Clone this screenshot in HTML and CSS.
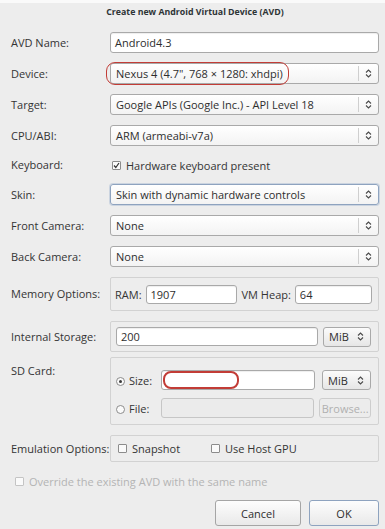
FILE: index.html
```html
<!DOCTYPE html>
<html lang="en">

<head>
    <meta charset="UTF-8" />
    <title>Create new Android Virtual Device (AVD)</title>
    <link rel="stylesheet" href="styles.css">
</head>

<body>
    <div class="dialog">
        <div class="title">Create new Android Virtual Device (AVD)</div>

        <div class="row row-first">
            <div class="lbl">AVD Name:</div>
            <div class="field"><div class="entry">Android4.3</div></div>
        </div>

        <div class="row">
            <div class="lbl">Device:</div>
            <div class="field">
                <div class="combo">
                    <span class="combo-text">Nexus 4 (4.7", 768 × 1280: xhdpi)</span>
                    <span class="combo-btn"><svg width="7" height="11" viewBox="0 0 7 11"><path d="M1 4.5 L3.5 2 L6 4.5 M1 6.5 L3.5 9 L6 6.5" fill="none" stroke="#4a4a4a" stroke-width="1.1"/></svg></span>
                    <span class="mark mark-device"></span>
                </div>
            </div>
        </div>

        <div class="row">
            <div class="lbl">Target:</div>
            <div class="field">
                <div class="combo">
                    <span class="combo-text">Google APIs (Google Inc.) - API Level 18</span>
                    <span class="combo-btn"><svg width="7" height="11" viewBox="0 0 7 11"><path d="M1 4.5 L3.5 2 L6 4.5 M1 6.5 L3.5 9 L6 6.5" fill="none" stroke="#4a4a4a" stroke-width="1.1"/></svg></span>
                </div>
            </div>
        </div>

        <div class="row">
            <div class="lbl">CPU/ABI:</div>
            <div class="field">
                <div class="combo">
                    <span class="combo-text">ARM (armeabi-v7a)</span>
                    <span class="combo-btn"><svg width="7" height="11" viewBox="0 0 7 11"><path d="M1 4.5 L3.5 2 L6 4.5 M1 6.5 L3.5 9 L6 6.5" fill="none" stroke="#4a4a4a" stroke-width="1.1"/></svg></span>
                </div>
            </div>
        </div>

        <div class="row row-short">
            <div class="lbl">Keyboard:</div>
            <div class="field check-line">
                <span class="check"><svg width="7" height="7" viewBox="0 0 7 7"><path d="M1 3.5 L2.8 5.5 L6 1" fill="none" stroke="#333" stroke-width="1.2"/></svg></span>
                <span>Hardware keyboard present</span>
            </div>
        </div>

        <div class="row">
            <div class="lbl">Skin:</div>
            <div class="field">
                <div class="combo combo-focus">
                    <span class="combo-text">Skin with dynamic hardware controls</span>
                    <span class="combo-btn"><svg width="7" height="11" viewBox="0 0 7 11"><path d="M1 4.5 L3.5 2 L6 4.5 M1 6.5 L3.5 9 L6 6.5" fill="none" stroke="#4a4a4a" stroke-width="1.1"/></svg></span>
                </div>
            </div>
        </div>

        <div class="row">
            <div class="lbl">Front Camera:</div>
            <div class="field">
                <div class="combo">
                    <span class="combo-text">None</span>
                    <span class="combo-btn"><svg width="7" height="11" viewBox="0 0 7 11"><path d="M1 4.5 L3.5 2 L6 4.5 M1 6.5 L3.5 9 L6 6.5" fill="none" stroke="#4a4a4a" stroke-width="1.1"/></svg></span>
                </div>
            </div>
        </div>

        <div class="row">
            <div class="lbl">Back Camera:</div>
            <div class="field">
                <div class="combo">
                    <span class="combo-text">None</span>
                    <span class="combo-btn"><svg width="7" height="11" viewBox="0 0 7 11"><path d="M1 4.5 L3.5 2 L6 4.5 M1 6.5 L3.5 9 L6 6.5" fill="none" stroke="#4a4a4a" stroke-width="1.1"/></svg></span>
                </div>
            </div>
        </div>

        <div class="row">
            <div class="lbl">Memory Options:</div>
            <div class="field group group-memory">
                <span class="inner-lbl">RAM:</span>
                <div class="entry entry-ram">1907</div>
                <span class="inner-lbl heap-lbl">VM Heap:</span>
                <div class="entry entry-grow">64</div>
            </div>
        </div>

        <div class="row">
            <div class="lbl">Internal Storage:</div>
            <div class="field group group-internal">
                <div class="entry entry-grow">200</div>
                <div class="unit">MiB <svg width="7" height="11" viewBox="0 0 7 11"><path d="M1 4.5 L3.5 2 L6 4.5 M1 6.5 L3.5 9 L6 6.5" fill="none" stroke="#4a4a4a" stroke-width="1.1"/></svg></div>
            </div>
        </div>

        <div class="row row-sd row-top">
            <div class="lbl lbl-sd">SD Card:</div>
            <div class="field group group-sd">
                <div class="sd-line">
                    <span class="sd-opt"><span class="radio radio-on"></span>Size:</span>
                    <div class="entry entry-sd">
                        <span class="mark mark-size"></span>
                    </div>
                    <div class="unit unit-sd">MiB <svg width="7" height="11" viewBox="0 0 7 11"><path d="M1 4.5 L3.5 2 L6 4.5 M1 6.5 L3.5 9 L6 6.5" fill="none" stroke="#4a4a4a" stroke-width="1.1"/></svg></div>
                </div>
                <div class="sd-line">
                    <span class="sd-opt"><span class="radio"></span>File:</span>
                    <div class="entry entry-sd entry-off"></div>
                    <div class="btn btn-off">Browse...</div>
                </div>
            </div>
        </div>

        <div class="row">
            <div class="lbl">Emulation Options:</div>
            <div class="field group group-emu">
                <span class="check-line emu-first"><span class="check"></span><span>Snapshot</span></span>
                <span class="check-line"><span class="check"></span><span>Use Host GPU</span></span>
            </div>
        </div>

        <div class="row row-short override">
            <span class="check check-off"></span>
            <span>Override the existing AVD with the same name</span>
        </div>

        <div class="row actions">
            <div class="btn btn-cancel">Cancel</div>
            <div class="btn btn-ok">OK</div>
        </div>
    </div>
</body>

</html>
```

FILE: styles.css
```css
* {
    box-sizing: border-box;
}

body {
    margin: 0;
    background: #ededed;
    font-family: 'Open Sans', 'DejaVu Sans', sans-serif;
    font-size: 11px;
    color: #343434;
}

.dialog {
    width: 385px;
    height: 529px;
    border-top: 3px solid #fafafa;
    padding: 0 6px 0 11px;
    overflow: hidden;
}

.title {
    height: 21px;
    line-height: 19px;
    text-align: center;
    font-weight: 700;
    font-size: 8.8px;
    color: #2e3436;
}

.row {
    display: flex;
    align-items: center;
    margin-top: 10px;
}

.row-first {
    margin-top: 8px;
}

.row-sd {
    margin-top: 5px;
}

.row-top {
    align-items: flex-start;
}

.row-short {
    height: 18px;
}

.lbl {
    width: 99px;
    flex: none;
    line-height: 14px;
}

.lbl-sd {
    margin-top: 7px;
}

.field {
    flex: 1;
    min-width: 0;
}

/* text entries */
.entry {
    position: relative;
    height: 21px;
    line-height: 19px;
    padding: 0 4px;
    border: 1px solid #a9a9a9;
    border-radius: 3px;
    background: #fff;
    color: #2e2e2e;
    box-shadow: inset 0 1px 1px rgba(0, 0, 0, 0.07);
}

.entry-grow {
    flex: 1;
    height: 19px;
    line-height: 17px;
}

.entry-ram {
    width: 91px;
    height: 19px;
    line-height: 17px;
}

.entry-sd {
    width: 154px;
    height: 20px;
}

.entry-off {
    background: #ebebeb;
    border-color: #c6c6c6;
    box-shadow: none;
}

/* combo boxes */
.combo {
    position: relative;
    display: flex;
    height: 21px;
    border: 1px solid #a9a9a9;
    border-radius: 3px;
    background: linear-gradient(#ffffff, #f3f3f3);
    color: #2e2e2e;
}

.combo-focus {
    border-color: #8ea3bf;
    box-shadow: 0 0 0 1px rgba(140, 165, 200, 0.35);
}

.combo-text {
    flex: 1;
    padding-left: 5px;
    line-height: 19px;
    white-space: nowrap;
    overflow: hidden;
}

.combo-btn {
    width: 20px;
    margin: 2px 0;
    border-left: 1px solid #cfcfcf;
    display: flex;
    align-items: center;
    justify-content: center;
}

/* red highlight rings */
.mark {
    position: absolute;
    border: 1.5px solid #c23c36;
    border-radius: 9px;
    pointer-events: none;
}

.mark-device {
    left: -5px;
    top: -2px;
    bottom: -2px;
    width: 183px;
}

.mark-size {
    left: 1px;
    top: 0;
    bottom: 0;
    width: 76px;
    border-width: 2px;
    border-radius: 8px;
}

/* check boxes and radios */
.check-line {
    display: flex;
    align-items: center;
}

.check {
    width: 9px;
    height: 9px;
    flex: none;
    margin: 0 5px 0 2px;
    border: 1px solid #8c8c8c;
    border-radius: 1px;
    background: #fafafa;
    display: flex;
    align-items: center;
    justify-content: center;
}

.check-off {
    border-color: #c4c4c4;
    margin: 0 5px 0 3px;
}

.radio {
    display: inline-block;
    width: 9px;
    height: 9px;
    margin-right: 4px;
    border: 1px solid #8c8c8c;
    border-radius: 50%;
    background: #fafafa;
    vertical-align: -1px;
    position: relative;
}

.radio-on::after {
    content: '';
    position: absolute;
    left: 2px;
    top: 2px;
    width: 3px;
    height: 3px;
    border-radius: 50%;
    background: #3a3a3a;
}

/* framed groups */
.group {
    border: 1px solid #d2d2d2;
    border-radius: 2px;
    display: flex;
    align-items: center;
}

.group-memory {
    height: 34px;
    padding: 0 6px 0 4px;
}

.inner-lbl {
    margin-right: 4px;
}

.heap-lbl {
    margin-left: 5px;
}

.group-internal {
    height: 31px;
    padding: 0 7px 0 5px;
}

.unit {
    width: 48px;
    height: 20px;
    margin-left: 5px;
    border: 1px solid #a9a9a9;
    border-radius: 3px;
    background: linear-gradient(#fbfbfb, #e6e6e6);
    display: flex;
    align-items: center;
    justify-content: space-between;
    padding: 0 6px 0 5px;
    color: #2e2e2e;
}

.group-sd {
    height: 68px;
    padding: 12px 7px 0 5px;
    flex-direction: column;
    align-items: stretch;
    gap: 8px;
}

.sd-line {
    display: flex;
    align-items: center;
}

.sd-opt {
    width: 45px;
    flex: none;
}

.unit-sd {
    width: 49px;
    margin-left: 7px;
}

.group-emu {
    height: 27px;
    padding-left: 5px;
}

.emu-first {
    width: 93px;
}

.override {
    color: #b4b4b4;
    padding-left: 1px;
}

/* buttons */
.btn {
    height: 26px;
    border: 1px solid #a5a5a5;
    border-radius: 3px;
    background: linear-gradient(#fdfdfd, #e9e9e9);
    display: flex;
    align-items: center;
    justify-content: center;
    color: #2e2e2e;
}

.btn-off {
    width: 52px;
    height: 20px;
    margin-left: 5px;
    border-color: #cdcdcd;
    background: #ececec;
    color: #b0b0b0;
}

.actions {
    justify-content: flex-end;
    gap: 8px;
}

.btn-cancel {
    width: 86px;
}

.btn-ok {
    width: 70px;
    border-color: #8ea3bf;
}
```
